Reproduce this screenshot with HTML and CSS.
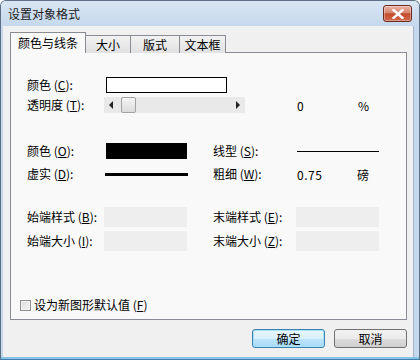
FILE: index.html
```html
<!DOCTYPE html>
<html lang="zh-CN">
<head>
<meta charset="utf-8">
<title>设置对象格式</title>
<link rel="stylesheet" href="styles.css">
</head>
<body>
<div class="window">
  <div class="titlebar">
    <span class="title">设置对象格式</span>
    <div class="close">
      <svg width="12" height="10" viewBox="0 0 12 10"><path d="M1.5 1 L10.5 9 M10.5 1 L1.5 9" stroke="#fff" stroke-width="2.4" stroke-linecap="square"/></svg>
    </div>
  </div>
  <div class="client">
    <div class="tabs">
      <div class="tab sel t1">颜色与线条</div>
      <div class="tab t2">大小</div>
      <div class="tab t3">版式</div>
      <div class="tab t4">文本框</div>
    </div>
    <div class="panel">
      <div class="row r1">
        <span class="lbl">颜色 (<u>C</u>):</span>
        <span class="fillbox"></span>
      </div>
      <div class="row r2">
        <span class="lbl">透明度 (<u>T</u>):</span>
        <div class="slider">
          <span class="arr left"></span>
          <span class="thumb"></span>
          <span class="arr right"></span>
        </div>
        <span class="pct">0</span>
        <span class="unit">%</span>
      </div>
      <div class="row r3">
        <span class="lbl">颜色 (<u>O</u>):</span>
        <span class="ctl"><span class="blackbox"></span></span>
        <span class="lbl rl">线型 (<u>S</u>):</span>
        <span class="thinline"></span>
      </div>
      <div class="row r4">
        <span class="lbl">虚实 (<u>D</u>):</span>
        <span class="ctl"><span class="thickline"></span></span>
        <span class="lbl rl">粗细 (<u>W</u>):</span>
        <span class="weight">0.75</span>
        <span class="pound">磅</span>
      </div>
      <div class="row r5">
        <span class="lbl">始端样式 (<u>B</u>):</span>
        <span class="ctl"><span class="graybox"></span></span>
        <span class="lbl rl">末端样式 (<u>E</u>):</span>
        <span class="graybox"></span>
      </div>
      <div class="row r6">
        <span class="lbl">始端大小 (<u>I</u>):</span>
        <span class="ctl"><span class="graybox"></span></span>
        <span class="lbl rl">末端大小 (<u>Z</u>):</span>
        <span class="graybox"></span>
      </div>
      <div class="row chk">
        <span class="checkbox"></span>
        <span class="chklbl">设为新图形默认值 (<u>F</u>)</span>
      </div>
    </div>
    <div class="buttons">
      <div class="btn ok">确定</div>
      <div class="btn">取消</div>
    </div>
  </div>
</div>
</body>
</html>
```

FILE: styles.css
```css
html, body {
  margin: 0;
  padding: 0;
  background: #ffffff;
}
body {
  font-family: "Noto Sans CJK SC", "Noto Sans", sans-serif;
  font-size: 12px;
  color: #000;
}
.window {
  width: 420px;
  height: 360px;
  box-sizing: border-box;
  border: 1px solid #5d6f84;
  border-bottom-color: #3f7fae;
  border-radius: 6px 6px 0 0;
  background: linear-gradient(to top, #86c3e6 0, #86c3e6 2px, #c6d8ec 2px);
  display: flex;
  flex-direction: column;
  overflow: hidden;
}
.titlebar {
  height: 25px;
  flex: none;
  display: flex;
  align-items: flex-start;
  background: linear-gradient(#d9e6f4, #c5d8ed);
}
.title {
  margin-left: 7px;
  margin-top: 4px;
  line-height: 18px;
  font-size: 12px;
  color: #1b1b1b;
}
.close {
  margin-left: auto;
  margin-right: 7px;
  margin-top: 4px;
  width: 27px;
  height: 15px;
  border: 1px solid #6b2b1f;
  border-radius: 3px;
  background: linear-gradient(#eab3a4, #d88570 45%, #c44a2e 52%, #cf6a4c);
  display: flex;
  align-items: center;
  justify-content: center;
  box-shadow: inset 0 0 0 1px rgba(255,255,255,0.35);
}
.client {
  flex: 1;
  margin: 0 6px 2px 2px;
  background: #f0f0f0;
  padding: 6px 6px 0 7px;
  display: flex;
  flex-direction: column;
  box-shadow: 1px 0 0 #9fb3c9;
}
.tabs {
  display: flex;
  align-items: flex-end;
  height: 21px;
  margin-bottom: -1px;
  position: relative;
  z-index: 1;
}
.tab {
  box-sizing: border-box;
  height: 18px;
  border: 1px solid #898c95;
  border-bottom: none;
  background: linear-gradient(#f2f2f2, #e1e1e1);
  display: flex;
  align-items: center;
  justify-content: center;
  line-height: 14px;
  padding-top: 1px;
  margin-left: -1px;
}
.tab.sel {
  height: 21px;
  background: #f9f9f9;
  margin-left: 0;
  padding-top: 0;
  padding-bottom: 1px;
}
.t1 { width: 76px; }
.t2 { width: 46px; }
.t3 { width: 50px; }
.t4 { width: 47px; }
.panel {
  box-sizing: border-box;
  height: 268px;
  border: 1px solid #898c95;
  background: #f9f9f9;
  padding: 24px 0 0 16px;
  display: flex;
  flex-direction: column;
}
.row {
  display: flex;
  align-items: center;
  height: 16px;
}
.r2 { margin-top: 4px; }
.r3 { margin-top: 30px; }
.r4 { margin-top: 7px; }
.r5 { margin-top: 25px; height: 20px; }
.r6 { margin-top: 4px; height: 20px; }
.chk { margin-top: 48px; height: 12px; margin-left: -7px; }
.lbl {
  width: 77px;
  flex: none;
  white-space: nowrap;
  line-height: 16px;
}
.lbl u, .chklbl u { text-decoration: underline; text-underline-offset: 1px; }
.ctl {
  width: 109px;
  flex: none;
  display: flex;
  align-items: center;
}
.rl { width: 83px; }
.fillbox {
  margin-left: 2px;
  width: 121px;
  height: 16px;
  box-sizing: border-box;
  border: 1px solid #000;
  background: #fff;
}
.slider {
  width: 141px;
  height: 16px;
  background: #e9e9e9;
  display: flex;
  align-items: center;
  flex: none;
}
.arr {
  width: 0;
  height: 0;
  border-top: 4px solid transparent;
  border-bottom: 4px solid transparent;
}
.arr.left {
  margin-left: 5px;
  border-right: 4px solid #222;
}
.arr.right {
  margin-left: auto;
  margin-right: 5px;
  border-left: 4px solid #222;
}
.thumb {
  margin-left: 8px;
  width: 15px;
  height: 16px;
  box-sizing: border-box;
  border: 1px solid #a2a2a2;
  border-radius: 2px;
  background: linear-gradient(#f4f4f4, #dcdcdc);
}
.pct { margin-left: 52px; width: 8px; }
.unit { margin-left: 53px; }
.blackbox {
  margin-left: 2px;
  width: 81px;
  height: 16px;
  background: #000;
}
.thickline {
  margin-left: 1px;
  width: 83px;
  height: 3px;
  background: #000;
}
.thinline {
  margin-left: 1px;
  width: 82px;
  height: 1px;
  background: #000;
}
.weight { margin-left: 1px; width: 60px; letter-spacing: 0.5px; }
.graybox {
  width: 83px;
  height: 20px;
  background: #eeeeee;
}
.checkbox {
  width: 11px;
  height: 11px;
  box-sizing: border-box;
  border: 1px solid #8e8f8f;
  background: linear-gradient(135deg, #dcdcdc, #f4f4f4);
  box-shadow: inset 0 0 0 1px #f4f4f4;
}
.chklbl {
  margin-left: 3px;
  line-height: 14px;
}
.buttons {
  display: flex;
  justify-content: flex-end;
  gap: 9px;
  margin-top: 9px;
}
.btn {
  width: 73px;
  height: 19px;
  box-sizing: border-box;
  border: 1px solid #707070;
  border-radius: 3px;
  background: linear-gradient(#f2f2f2 0%, #ebebeb 50%, #dddddd 51%, #cfcfcf 100%);
  display: flex;
  align-items: center;
  justify-content: center;
  line-height: 14px;
}
.btn.ok {
  border-color: #3c7fb1;
  background: linear-gradient(#eaf6fd 0%, #d9f0fc 50%, #bee6fd 51%, #a7d9f5 100%);
  box-shadow: inset 0 0 0 1px #a6e3f8;
}
```
